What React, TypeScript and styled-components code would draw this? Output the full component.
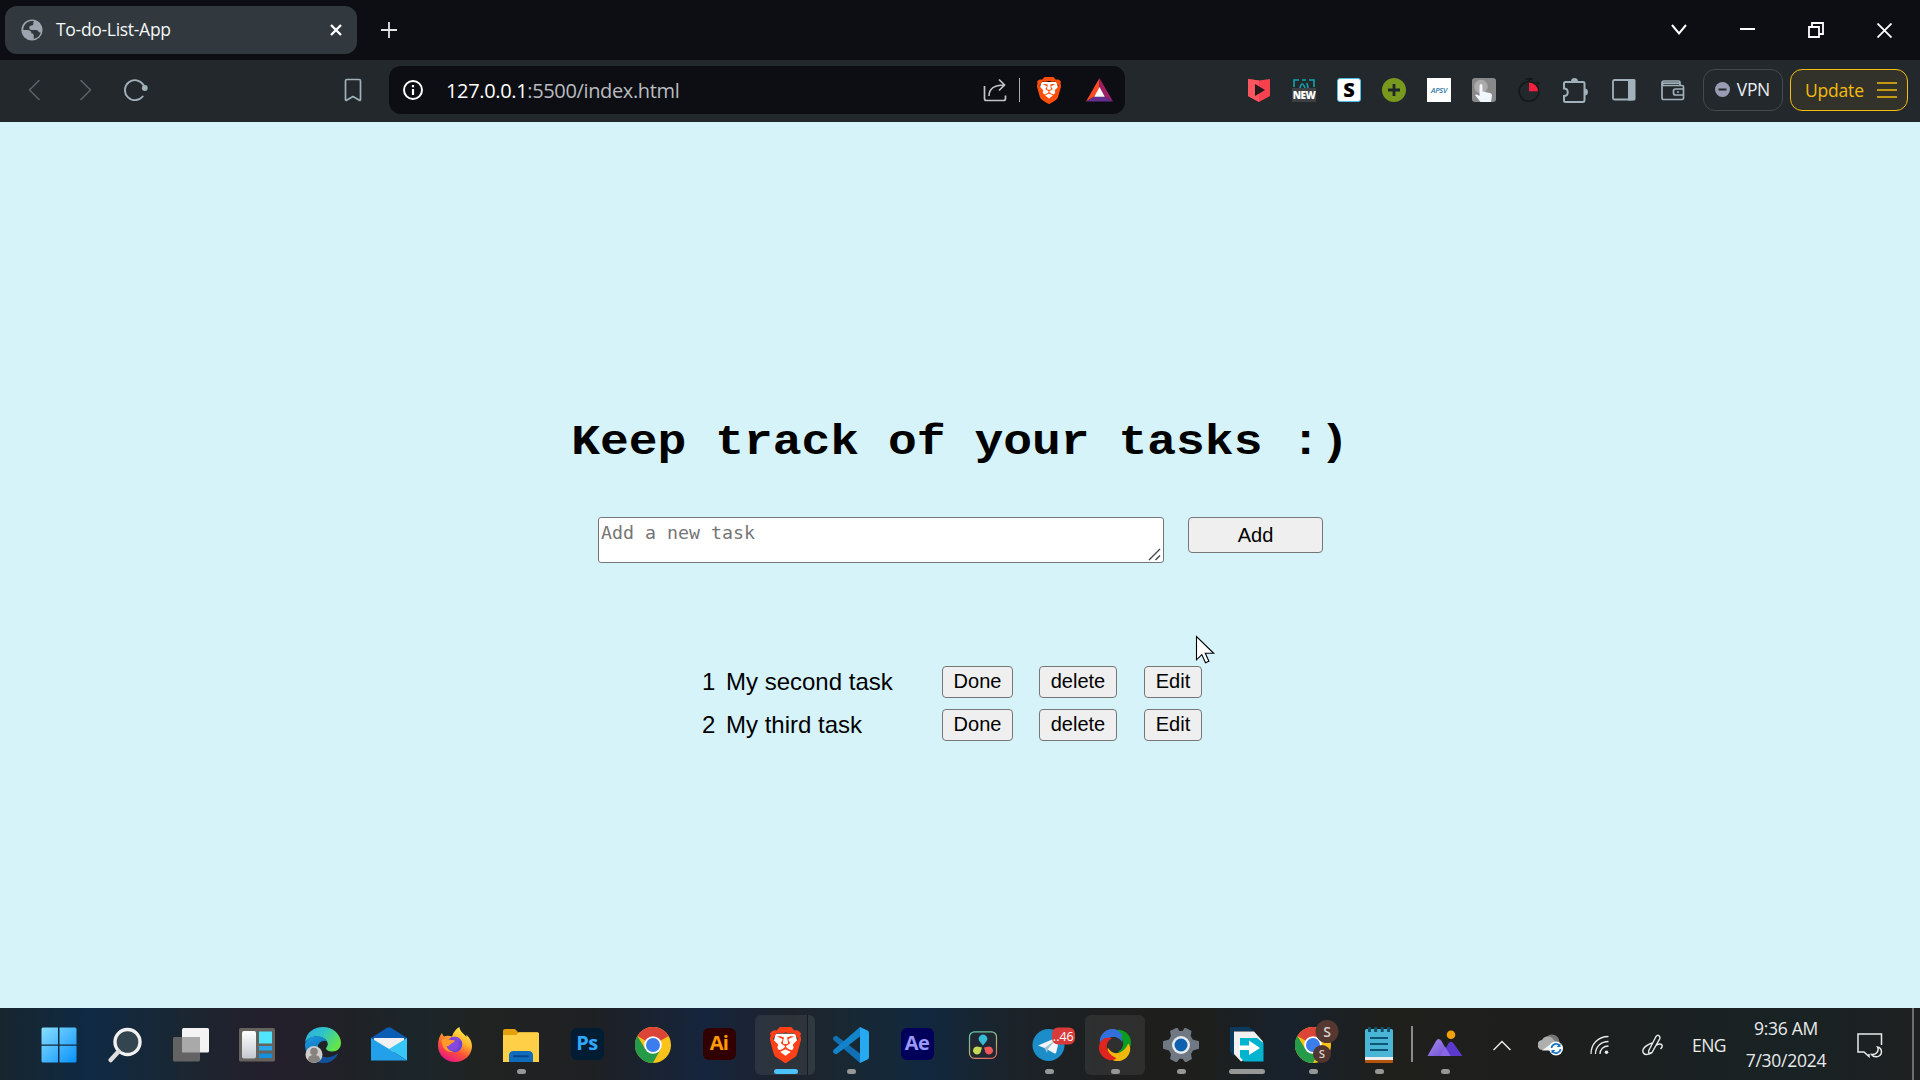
import React from "react";
import styled, { createGlobalStyle, css } from "styled-components";
import { SiBrave } from "react-icons/si";

const UI_FONT = `"Open Sans", "Noto Sans", sans-serif`;
const ICON = "#a0b1bb";

const GlobalStyle = createGlobalStyle`
  * { box-sizing: border-box; }
  html, body { margin: 0; padding: 0; overflow: hidden; background: #d5f3f9; }
  svg { display: block; flex: none; }
`;

const Screen = styled.div`
  display: grid;
  grid-template-rows: 60px 62px 1fr 72px;
  width: 1920px;
  height: 1080px;
  overflow: hidden;
  font-family: ${UI_FONT};
`;

/* ---------- window chrome ---------- */

const TabStrip = styled.header`
  display: flex;
  align-items: center;
  padding: 0 27px 0 5px;
  background: #0d0e13;
`;

const Tab = styled.div`
  display: flex;
  align-items: center;
  width: 352px;
  height: 48px;
  padding: 0 15px 0 16px;
  border-radius: 12px;
  background: #31393e;
  color: #f4f6f7;
`;

const TabTitle = styled.span`
  flex: 1;
  margin: 0 0 2px 13px;
  font-size: 17.5px;
  line-height: 24px;
  letter-spacing: -0.3px;
  white-space: nowrap;
`;

const NewTab = styled.div`
  margin-left: 24px;
`;

const WindowControls = styled.div`
  display: flex;
  align-items: center;
  gap: 53px;
  margin: 0 1px 0 auto;
`;

const Toolbar = styled.nav`
  display: flex;
  align-items: center;
  padding: 0 12px 2px 24px;
  background: #22282b;
  color: ${ICON};
`;

const NavButtons = styled.div`
  display: flex;
  align-items: center;
  gap: 28px;
  width: 317px;
`;

const BookmarkSlot = styled.div`
  width: 48px;
  padding-left: 3px;
`;

const AddressBar = styled.div`
  display: flex;
  align-items: center;
  width: 736px;
  height: 48px;
  padding: 0 12px 0 13px;
  border-radius: 12px;
  background: #0d0e13;
`;

const Address = styled.span`
  flex: 1;
  margin: 1px 0 0 22px;
  color: #b9bcc0;
  font-size: 20px;
  line-height: 26px;
  letter-spacing: -0.35px;
  white-space: nowrap;
  b { font-weight: 400; color: #fff; }
`;

const Divider = styled.i`
  width: 1px;
  height: 24px;
  margin: 0 17px 0 12px;
  background: #a9abae;
`;

const AddressActions = styled.div`
  display: flex;
  align-items: center;
  gap: 25px;
`;

const Extensions = styled.div`
  display: flex;
  align-items: center;
  gap: 21px;
  margin-left: auto;
`;

const BrowserTools = styled.div`
  display: flex;
  align-items: center;
  gap: 24px;
  margin: 0 18px 0 21px;
`;

const Square = styled.div<{ $bg: string }>`
  display: flex;
  align-items: center;
  justify-content: center;
  width: 24px;
  height: 24px;
  border-radius: 3px;
  background: ${(p) => p.$bg};
`;

const StylusBadge = styled(Square)`
  border: 1px solid #4dbdea;
  color: #000;
  font: 800 20px/22px ${UI_FONT};
`;

const ApsvBadge = styled(Square)`
  border-radius: 0;
  color: #2b77a8;
  font: italic 600 7.5px/9px ${UI_FONT};
  letter-spacing: -0.3px;
`;

const NewBadge = styled.div`
  display: flex;
  flex-direction: column;
  width: 24px;
  height: 24px;
  span {
    height: 14px;
    background: #3d4143;
    color: #fff;
    font: 800 10px/14px ${UI_FONT};
    text-align: center;
    letter-spacing: -0.5px;
  }
`;

const Pill = styled.div<{ $w: number; $accent?: boolean }>`
  display: flex;
  align-items: center;
  justify-content: space-between;
  width: ${(p) => p.$w}px;
  height: 42px;
  border: 1px solid #404b50;
  border-radius: 12px;
  padding: 0 12px 2px 11px;
  color: #eceef2;
  font-size: 17.5px;
  letter-spacing: -0.3px;
  ${(p) =>
    p.$accent &&
    css`
      margin-left: 7px;
      padding: 0 10px 1px 14px;
      border-color: #f5be10;
      background: #33322a;
      color: #f2bb0f;
      letter-spacing: -0.2px;
    `}
`;

/* ---------- to-do page ---------- */

const Page = styled.main`
  display: flex;
  flex-direction: column;
  align-items: center;
  padding-top: 292px;
  background: #d5f3f9;
  color: #000;
  font-family: "Liberation Sans", Arial, sans-serif;
`;

const Title = styled.h1`
  margin: 0;
  font: 700 48px/54px "Liberation Mono", "Courier New", monospace;
  white-space: pre;
  transform: scaleY(0.89);
  transform-origin: 50% 41px;
`;

const TaskForm = styled.form`
  display: flex;
  align-items: flex-start;
  gap: 24px;
  width: 725px;
  margin: 49px 0 0 1px;
`;

const Field = styled.div`
  position: relative;
  width: 566px;
  height: 46px;
  svg { position: absolute; right: 3px; bottom: 2px; }
`;

const TaskInput = styled.textarea`
  display: block;
  width: 100%;
  height: 100%;
  margin: 0;
  padding: 3px 2px;
  border: 1px solid #767676;
  border-radius: 3px;
  background: #fff;
  resize: none;
  overflow: hidden;
  outline: none;
  font: 18.27px/24px "DejaVu Sans Mono", "Liberation Mono", monospace;
  &::placeholder { color: #757575; opacity: 1; }
`;

const Button = styled.button<{ $w: number; $h?: number }>`
  width: ${(p) => p.$w}px;
  height: ${(p) => p.$h ?? 32}px;
  padding: 0 0 ${(p) => (p.$h ? 1 : 3)}px;
  border: 1px solid #767676;
  border-radius: 4px;
  background: #efefef;
  color: #000;
  font: 20px/24px "Liberation Sans", Arial, sans-serif;
`;

const TaskList = styled.div`
  display: grid;
  gap: 11px;
  width: 500px;
  margin: 103px 0 0 -16px;
`;

const TaskRow = styled.div`
  display: grid;
  grid-template-columns: 24px 216px 97px 105px 58px;
  align-items: center;
  height: 32px;
  font-size: 24px;
  line-height: 28px;
`;

const Pointer = styled.svg`
  position: absolute;
  left: 1195px;
  top: 635px;
`;

/* ---------- taskbar ---------- */

const Taskbar = styled.footer`
  display: flex;
  align-items: center;
  padding-left: 26px;
  background: linear-gradient(
    90deg,
    #17252d 0, #0f2a44 90px, #1b2630 190px, #231f2c 265px, #202126 350px, #1b262a 415px,
    #202321 480px, #1e2023 590px, #15253d 705px, #1e232b 790px, #182833 850px, #11283f 925px,
    #1b232a 1010px, #1e1f1e 1110px, #1e1e1c 1200px, #17222d 1290px, #1f1f1c 1380px,
    #1e1e1c 1530px, #1a2122 1700px, #192224 1800px, #1e2021 1920px
  );
  color: #e9eaea;
`;

const AppSlot = styled.div`
  display: flex;
  justify-content: center;
  width: 66px;
  height: 72px;
  padding-top: 7px;
`;

const AppTile = styled.div<{ $active?: boolean; $stack?: boolean }>`
  display: flex;
  flex-direction: column;
  align-items: center;
  width: 60px;
  height: 60px;
  padding-top: 12px;
  border-radius: 6px;
  background: ${(p) => (p.$active ? "rgba(255,255,255,0.075)" : "transparent")};
  ${(p) =>
    p.$stack &&
    css`
      border-right: 7px solid rgba(255, 255, 255, 0.02);
      box-shadow: inset -1px 0 0 rgba(0, 0, 0, 0.45);
      padding-left: 8px;
    `}
`;

const Indicator = styled.i<{ $w: number; $color?: string }>`
  width: ${(p) => p.$w}px;
  height: 5px;
  margin-top: 6px;
  border-radius: 3px;
  background: ${(p) => p.$color ?? "#969797"};
`;

const AdobeTile = styled.div<{ $bg: string; $fg: string }>`
  width: 33px;
  height: 32px;
  margin: 1px 0 3px;
  border-radius: 6px;
  background: ${(p) => p.$bg};
  color: ${(p) => p.$fg};
  font: 700 20px/29px ${UI_FONT};
  letter-spacing: -0.6px;
  text-align: center;
`;

const BarDivider = styled.i`
  width: 2px;
  height: 36px;
  margin: 0 -1px;
  background: #8a8b8a;
`;

const Tray = styled.div`
  display: flex;
  align-items: center;
  height: 72px;
  padding: 2px 6px 0 15px;
  margin-left: auto;
  flex: 1;
`;

const TrayItem = styled.div<{ $w: number }>`
  display: flex;
  justify-content: center;
  width: ${(p) => p.$w}px;
  font-size: 17.5px;
  letter-spacing: -0.6px;
`;

const Clock = styled.div`
  width: 110px;
  margin-left: 6px;
  margin-top: -2px;
  text-align: center;
  font-size: 17.5px;
  line-height: 32px;
  letter-spacing: -0.25px;
`;

const ShowDesktop = styled.i`
  align-self: stretch;
  width: 2px;
  margin: -2px 0 0 auto;
  background: #6b6d6e;
`;

/* ---------- icons ---------- */

const Line = ({ w, h, d, sw = 2, color = "currentColor", cap = "butt" }: { w: number; h: number; d: string; sw?: number; color?: string; cap?: "butt" | "round" }) => (
  <svg width={w} height={h} viewBox={`0 0 ${w} ${h}`} fill="none" stroke={color} strokeWidth={sw} strokeLinecap={cap} strokeLinejoin={cap === "round" ? "round" : "miter"}>
    <path d={d} />
  </svg>
);

const Globe = () => (
  <svg width="22" height="22" viewBox="0 0 22 22">
    <circle cx="11" cy="11" r="10.6" fill="#9fa5b0" />
    <path d="M13 2.300C7 1 2.300 5.500 2.300 11h4.200c2.500 0 4 1.300 4 3.500 1.500 0 2.200.6 2.200 2.200v3c3.500-.5 6.300-2.800 7-6.500-1 .5-1.800 0-2.200-.7-.5-1-1.500-1.500-3-1.500h-3.800c-1.500 0-2.400-1-2.400-2.300 0-1.500 1-2.200 2.500-2.200 1.400 0 1.500-1.200 1.500-2.200C12.300 3.300 12.500 2.800 13 2.300Z" fill="#31393e" />
  </svg>
);

const Brave = ({ size, w, color }: { size: number; w: number; color: string }) => (
  <svg width={w} height={size} viewBox="2 0 20 24" preserveAspectRatio="none">
    <path d="M5.500 4.500h13l1 5-3.500 8-4 3-4-3-3.500-8z" fill="#fff" />
    <SiBrave size={24} color={color} />
  </svg>
);

const Bat = () => (
  <svg width="27" height="24" viewBox="0 0 27 24">
    <path d="M13.500 0 0 23.500l8.500-5 5-9z" fill="#ff4a24" />
    <path d="M13.500 0 27 23.500l-8.500-5-5-9z" fill="#9e1f63" />
    <path d="M0 23.500h27l-8.500-5h-10z" fill="#662d91" />
    <path d="m13.500 9-5.300 9.800h10.600z" fill="#fff" />
  </svg>
);

const Puzzle = () => (
  <svg width="26" height="25" viewBox="0 0 26 25" fill="none" stroke="currentColor" strokeWidth="2">
    <path d="M3.500 4H21q1.500 0 1.500 1.500V22q0 2-1.500 2H3.500Q2 24 2 22.500V18c5 0 5-7.500 0-7.500v-5Q2 4 3.500 4Z" />
    <path d="M9 3.500a3.500 3.500 0 0 1 7 0zM22.500 10.500a3.500 3.500 0 0 1 0 7z" fill="currentColor" stroke="none" />
  </svg>
);

const Chrome = ({ s = 36 }: { s?: number }) => (
  <svg width={s} height={s} viewBox="0 0 36 36">
    <circle cx="18" cy="18" r="18" fill="#f9c31a" />
    <path d="M18 18 2.400 9A18 18 0 0 1 33.600 9Z" fill="#dc4437" />
    <path d="M2.400 9A18 18 0 0 0 18 36l7.400-13.500L18 18 10.500 22.200Z" fill="#259a49" />
    <circle cx="18" cy="18" r="8.800" fill="#fff" />
    <circle cx="18" cy="18" r="7" fill="#3b7ded" />
  </svg>
);

const Windows = () => (
  <svg width="36" height="36" viewBox="0 0 36 36">
    <defs><linearGradient id="win" x1="0" y1="0" x2="36" y2="36" gradientUnits="userSpaceOnUse"><stop stopColor="#8be0fd" /><stop offset="1" stopColor="#0690fb" /></linearGradient></defs>
    <path fill="url(#win)" d="M2 .5h15v17H.500V2Q.500.500 2 .500ZM18.500.500H34q1.500 0 1.500 1.500v15.500h-17zM.500 18.800H17v16.700H2Q.500 35.500.500 34zM18.500 18.800h17V34q0 1.500-1.500 1.500H18.500z" />
  </svg>
);

const Search = () => (
  <svg width="34" height="36" viewBox="0 0 34 36">
    <circle cx="19.500" cy="15" r="12.500" fill="#33454f" stroke="#f1f1f1" strokeWidth="3.400" />
    <path d="m10.500 24.500-7.800 8.500" stroke="#dedede" strokeWidth="4.500" strokeLinecap="round" />
  </svg>
);

const TaskView = () => (
  <svg width="36" height="36" viewBox="0 0 36 36">
    <rect x="9" y="1" width="27" height="24.500" rx="1.500" fill="#f3f3f3" />
    <rect y="10" width="27" height="24.500" rx="1.500" fill="#636363" />
    <path d="M9 10h16.500q1.500 0 1.500 1.500v14H9z" fill="#a9a9a9" />
  </svg>
);

const Widgets = () => (
  <svg width="36" height="36" viewBox="0 0 36 36">
    <defs><linearGradient id="wid" x1="0" y1="0" x2="0" y2="1"><stop stopColor="#fff" /><stop offset="1" stopColor="#c3c8cf" /></linearGradient></defs>
    <rect y="1" width="36" height="33.500" rx="1.500" fill="#66625e" />
    <rect x="3" y="4" width="14" height="27.500" rx="2" fill="url(#wid)" />
    <path fill="#50e6ff" d="M20 4.500h13v12H20z" />
    <path fill="#28a8ea" d="M20 19h13v4.500H20z" />
    <path fill="#1490df" d="M20 26.500h13V31H20z" />
  </svg>
);

const Edge = () => (
  <svg width="36" height="36" viewBox="0 0 36 36">
    <defs>
      <linearGradient id="edge1" x1="0" y1="0" x2="1" y2=".5"><stop stopColor="#2ca9e5" /><stop offset=".5" stopColor="#2fc4c8" /><stop offset="1" stopColor="#62e54b" /></linearGradient>
      <linearGradient id="edge2" x1="0" y1="0" x2=".6" y2="1"><stop stopColor="#1b9de2" /><stop offset="1" stopColor="#0c59a4" /></linearGradient>
    </defs>
    <path d="M0 16C1 5 9 0 18 0c10 0 18 7.500 18 16 0 5-4 8.500-8.500 8.500-4 0-6.500-1.500-6.500-3 0-1 1.800-2 1.800-4.500 0-4-5-7.500-11-7.500C6 9.500 2 12 0 16Z" fill="url(#edge1)" />
    <path d="M0 17c2-5 6-7.700 11.500-7.700 5 0 9 2 10.500 5-5-2-9.500 2-9.500 7.700 0 7 8 9.500 13 8 3-.8 5.500-2.500 7.500-3.500C30 33 24 36 18 36 8 36-.500 28 0 17Z" fill="url(#edge2)" />
    <path d="M12.500 22c0 6 6 10 12 9 3-.5 6-2.500 8.500-4.500C30 33 24 36 19 36c-8-1-11-9-6.500-14Z" fill="#12509a" />
    <circle cx="9" cy="27.500" r="8.500" fill="#d0cecb" />
    <circle cx="9" cy="24.500" r="3.800" fill="#87827d" />
    <path d="M3 33.500c0-5 3-5.500 6-5.500s6 .5 6 5.500Q9 38 3 33.500Z" fill="#87827d" />
  </svg>
);

const Mail = () => (
  <svg width="36" height="36" viewBox="0 0 36 36">
    <path d="M0 11 16 .800q2-1.200 4 0L36 11v5H0z" fill="#0a5cb5" />
    <path d="M3 11h30v8L18 28 3 19z" fill="#f2f1f1" />
    <path d="M36 11v22.500L18 22z" fill="#38c6f6" />
    <path d="M0 11v22.500h36L18 22z" fill="#23a0ea" />
  </svg>
);

const Firefox = () => (
  <svg width="36" height="36" viewBox="0 0 36 36">
    <defs><linearGradient id="ff" x1=".8" y1=".05" x2=".3" y2="1"><stop stopColor="#fff04d" /><stop offset=".35" stopColor="#ffb52c" /><stop offset=".65" stopColor="#ff5138" /><stop offset="1" stopColor="#e31587" /></linearGradient></defs>
    <path d="M5 6c.5 1.500 1 2.500 2 3.500 2-1 5-1.300 8 0C16.500 5 19 1.500 22.500 0c0 4 4 6.500 7 10 0-1 0-1.500-.3-2.500C33 11 35 15 35 19c0 9-7.500 16-17 16S1 28 1 18.500C1 13 2.500 9 5 6Z" fill="url(#ff)" />
    <circle cx="17.500" cy="17.500" r="7.800" fill="#6b43d8" />
    <path d="M14 10.500c4-2 9 0 11 4-2-1-3.500-.5-4-.3 2 3 1 8-3.500 9-6 1-9-4-7.500-7.500 2 1 5 .3 8-1.500-1.300-1.500-3-2-4-3.700Z" fill="#8448dd" />
    <path d="M4.500 13c3-2 6-1 8-.5 1.500.6 4.500.6 5.500 1-.5 2-3.500 2.500-5 4-.8 1.200-2 2-3.500 1.500 1 4 4.500 5.500 7.500 5.500-6 2-12-2-12.500-11.500Z" fill="#ff9a2b" />
  </svg>
);

const Folder = () => (
  <svg width="36" height="36" viewBox="0 0 36 36">
    <path d="M0 4q0-2 2-2h10l3.500 3.500H34q2 0 2 2V12H0z" fill="#e2a00c" />
    <path d="M0 8h13l3-2.700h18.500Q36 5.300 36 7v28H0z" fill="#ffcf48" />
    <path d="M6 35v-6.500Q6 24 10.500 24h15q4.500 0 4.500 4.500V35z" fill="#0f6cbd" />
    <path d="M11 29.200h14" stroke="#0a4585" strokeWidth="2" strokeLinecap="round" />
  </svg>
);

const VSCode = () => (
  <svg width="36" height="36" viewBox="0 0 36 36">
    <path d="M0 11.500q0-1 1-1.700l1.500-.8q1-.4 2 .4L27 26.500V36L1 13.500Q0 12.500 0 11.500Z" fill="#1070b3" />
    <path d="M0 24.500q0 1 1 1.700l1.500.8q1 .4 2-.4L27 9.500V0L1 22.500Q0 23.500 0 24.500Z" fill="#1384cb" />
    <path d="M27 0v36l7.500-3.500Q36 31.800 36 30V6q0-1.800-1.500-2.500L27 0Z" fill="#27a9f2" />
  </svg>
);

const Davinci = () => (
  <svg width="30" height="36" viewBox="0 0 30 36">
    <defs><linearGradient id="dv" x1=".3" y1="0" x2=".7" y2="1"><stop stopColor="#61c8ab" /><stop offset=".6" stopColor="#b8b06a" /><stop offset="1" stopColor="#e0695c" /></linearGradient></defs>
    <rect x="1.500" y="4.800" width="27" height="26.500" rx="5" fill="#202834" stroke="url(#dv)" strokeWidth="1.200" />
    <path d="M15 18.500 11.700 14.500a4.200 4.200 0 1 1 6.600 0Z" fill="#37b9d8" />
    <path d="m14 20.500-1.500 5a4 4 0 1 1-3.500-6Z" fill="#c5d954" />
    <path d="m16 20.500 1.500 5a4 4 0 1 0 3.500-6Z" fill="#ef5758" />
  </svg>
);

const Telegram = () => (
  <svg width="44" height="36" viewBox="0 0 44 36">
    <circle cx="17.500" cy="18" r="16" fill="#1c8dc9" />
    <path d="m7 18.500 20-8.500q2-.5 1.500 1.700L25.200 25.500q-.4 1.500-2 .7L13.500 21z" fill="#f2f5f7" />
    <path d="m13.500 21 11-8-7.500 9-1 4z" fill="#9fc2d6" />
    <rect x="21" y=".5" width="23" height="17" rx="6" fill="#d83b39" />
    <text x="32.300" y="13.500" fill="#fff" fontSize="12.500" fontFamily="Open Sans, sans-serif" textAnchor="middle">..46</text>
  </svg>
);

const PETAL = "M2 12C4 3 13-1 20 2c5.500 2.500 7 8 5.500 13C22.500 9.500 17 8 12 10.500c-4 2-6 5-8 9-1.500-1.500-2.500-4.500-2-7.500Z";

const ShareX = () => (
  <svg width="36" height="36" viewBox="0 0 36 36">
    <g transform="translate(1 1) scale(.945)">
      <path d={PETAL} fill="#3470dc" />
      <path d={PETAL} fill="#0c9c22" transform="rotate(90 18 18)" />
      <path d={PETAL} fill="#f0b90c" transform="rotate(180 18 18)" />
      <path d={PETAL} fill="#e0241f" transform="rotate(270 18 18)" />
      <path d="M5.500 7C9 2 15 .200 20 2c3 1.400 5 3.800 5.700 6.800L22 11.500C18 8 14 8.500 10.500 11z" fill="#3470dc" />
    </g>
  </svg>
);

const Gear = () => (
  <svg width="36" height="36" viewBox="0 0 36 36">
    <path d="M13 1h1.500l2 3h3l2-3H23l5.500 3-.8 5 2 3.500 6.300 1.700v7.600l-6 1.700-2 3.500.9 5L23.500 35H22l-2.500-3.200h-3L14 35h-1.500L7 32l1-5-2-3.500-6-1.700v-7.600L6 12.500 8 9 7 4z" fill="#6f7883" />
    <circle cx="18" cy="18" r="9" fill="#e8ebed" />
    <circle cx="18" cy="18" r="6.500" fill="#0f61b0" />
  </svg>
);

const Bandicut = () => (
  <svg width="36" height="36" viewBox="0 0 36 36">
    <path d="M1 0h19l5 4H5v25L1 24z" fill="#0a3a5e" />
    <path d="M5 4.500h20l9 10V19L29 26 12 34.500 5 27z" fill="#f0f1f1" />
    <path d="M11 11h17l6.500 5v18.500H15L11 30z" fill="#00b4d0" />
    <path d="M10 18.500h10v-5L31 21l-11 7v-5H10z" fill="#fff" />
  </svg>
);

const ChromeProfiles = () => (
  <svg width="44" height="44" viewBox="0 0 44 44">
    <svg x="0" y="8" width="36" height="36"><Chrome /></svg>
    <circle cx="32" cy="12.500" r="11.500" fill="#55382f" />
    <circle cx="27" cy="35" r="9" fill="#51352e" />
    <g fill="#d9d0cd" fontFamily="Open Sans, sans-serif" textAnchor="middle">
      <text x="32" y="17.500" fontSize="14" fontWeight="600">S</text>
      <text x="27" y="39" fontSize="11.500" fontWeight="600">S</text>
    </g>
  </svg>
);

const Notepad = () => (
  <svg width="30" height="36" viewBox="0 0 30 36">
    <rect x="1" y="28" width="28" height="8" rx="1" fill="#b4530c" />
    <path d="M1 28h28v5H1z" fill="#f0eeec" />
    <path d="M1 3.500Q1 2 2.500 2h25Q29 2 29 3.500V30H1z" fill="#4bb5d6" />
    <path d="M6 11h18M6 17h18M6 23h18" stroke="#0d5574" strokeWidth="2" />
    <path d="M5.500 0v5M11.700 0v5M18.200 0v5M24.500 0v5" stroke="#12536e" strokeWidth="3" />
  </svg>
);

const Photos = () => (
  <svg width="36" height="36" viewBox="0 0 36 36">
    <defs><linearGradient id="ph" x1="0" y1="0" x2="1" y2="1"><stop stopColor="#a98ced" /><stop offset="1" stopColor="#6a4bd4" /></linearGradient></defs>
    <circle cx="24" cy="7.800" r="4.300" fill="#f2a30c" />
    <path d="M.500 29 9 14q2.500-4 5.500 0l8.500 15z" fill="url(#ph)" />
    <path d="M15 29 21 17q3-4.500 6 0l8.500 12z" fill="#5a39cc" />
    <path d="m13 29 5-9.500L23.500 29z" fill="#8a68e4" />
  </svg>
);

type AppItem = { icon: React.ReactNode; dot?: number; color?: string; active?: boolean; stack?: boolean };

const apps: AppItem[] = [
  { icon: <Windows /> },
  { icon: <Search /> },
  { icon: <TaskView /> },
  { icon: <Widgets /> },
  { icon: <Edge /> },
  { icon: <Mail /> },
  { icon: <Firefox /> },
  { icon: <Folder />, dot: 9 },
  { icon: <AdobeTile $bg="#001d34" $fg="#31a8ff">Ps</AdobeTile> },
  { icon: <Chrome /> },
  { icon: <AdobeTile $bg="#310000" $fg="#ff9a00">Ai</AdobeTile> },
  { icon: <Brave size={36} w={31} color="#ff4018" />, dot: 24, color: "#4cc2ff", active: true, stack: true },
  { icon: <VSCode />, dot: 9 },
  { icon: <AdobeTile $bg="#00005b" $fg="#9999ff">Ae</AdobeTile> },
  { icon: <Davinci /> },
  { icon: <Telegram />, dot: 9 },
  { icon: <ShareX />, dot: 9, active: true },
  { icon: <Gear />, dot: 9 },
  { icon: <Bandicut />, dot: 36 },
  { icon: <ChromeProfiles />, dot: 9 },
  { icon: <Notepad />, dot: 9 },
];

const IconBox = styled.div`
  display: flex;
  align-items: flex-end;
  width: 36px;
  height: 36px;
  justify-content: center;
  &:has(> svg[width="44"]) { justify-content: flex-start; }
`;

const TaskbarApp = ({ icon, dot, color, active, stack }: AppItem) => (
  <AppSlot>
    <AppTile $active={active} $stack={stack}>
      <IconBox>{icon}</IconBox>
      {dot && <Indicator $w={dot} $color={color} />}
    </AppTile>
  </AppSlot>
);

const tasks = ["My second task", "My third task"];

export default function App() {
  return (
    <Screen>
      <GlobalStyle />
      <TabStrip>
        <Tab>
          <Globe />
          <TabTitle>To-do-List-App</TabTitle>
          <Line w={12} h={12} d="m1 1 10 10M11 1 1 11" sw={2.4} color="#fff" />
        </Tab>
        <NewTab><Line w={16} h={16} d="M8 0v16M0 8h16" sw={1.8} color="#e3e4e6" /></NewTab>
        <WindowControls>
          <Line w={16} h={12} d="m1 1 7 8.500L15 1" color="#fff" />
          <Line w={15} h={4} d="M0 1h15" color="#fff" />
          <Line w={16} h={16} d="M1 5h10v10H1zM4 5V1h11v11h-4" sw={1.8} color="#fff" />
          <Line w={15} h={15} d="m.5.5 14 14M14.500.5l-14 14" sw={1.8} color="#fff" />
        </WindowControls>
      </TabStrip>

      <Toolbar>
        <NavButtons>
          <Line w={20} h={22} d="M15 1.500 5.500 11l9.500 9.500" sw={1.6} color="#586369" cap="round" />
          <Line w={24} h={22} d="m9 1.500 9.500 9.500L9 20.500" sw={1.6} color="#586369" cap="round" />
          <svg width="24" height="22" viewBox="0 0 24 22" fill="none" stroke={ICON} strokeWidth="1.900" strokeLinecap="round">
            <path d="M19.500 6A10 10 0 1 0 18.700 17.500" />
            <circle cx="20.800" cy="9" r="2.900" fill={ICON} stroke="none" />
          </svg>
        </NavButtons>
        <BookmarkSlot>
          <Line w={18} h={24} d="M3 1.500h12q1.500 0 1.500 1.500v18.500q0 1.500-1.500.5l-6-3.500L3 22q-1.500 1-1.500-.5V3Q1.500 1.500 3 1.500Z" sw={1.7} cap="round" />
        </BookmarkSlot>
        <AddressBar>
          <svg width="22" height="22" viewBox="0 0 22 22">
            <circle cx="11" cy="11" r="9" fill="none" stroke="#fff" strokeWidth="2" />
            <path d="M11 10v6M11 6v2.200" stroke="#fff" strokeWidth="2.200" />
          </svg>
          <Address><b>127.0.0.1</b>:5500/index.html</Address>
          <Line w={24} h={24} d="M1.500 8v12.500q0 2 2 2h17q2 0 2-2v-3M6 18C6 11 11 7 21 7M16 1.500 21.500 7 16 12.500" sw={1.7} color="#c1c3c6" />
          <Divider />
          <AddressActions>
            <Brave size={27} w={24} color="#fb4e0b" />
            <Bat />
          </AddressActions>
        </AddressBar>
        <Extensions>
          <svg width="24" height="24" viewBox="0 0 24 24">
            <path d="m1 1 11 1.500L23 1v17l-11 6-11-6z" fill="#f4414d" />
            <path d="m1 1 11 1.500V24L1 18z" fill="#fa5660" />
            <path d="m8 6 10 6-10 6z" fill="#22191c" />
          </svg>
          <NewBadge>
            <Line w={24} h={10} d="M2 9V2h5M10 2h4M17 2h5v7M8 10q2-8 5 0M15 5l1 5" sw={1.6} color="#10a2ae" />
            <span>NEW</span>
          </NewBadge>
          <StylusBadge $bg="#fff">S</StylusBadge>
          <svg width="24" height="24" viewBox="0 0 24 24">
            <circle cx="12" cy="12" r="12" fill="#78991d" />
            <path d="M12 6v12M6 12h12" stroke="#20272a" strokeWidth="2.800" />
          </svg>
          <ApsvBadge $bg="#fff">APSV</ApsvBadge>
          <Square $bg="#898989">
            <svg width="24" height="24" viewBox="0 0 24 24">
              <circle cx="9" cy="8.500" r="6.800" fill="#ababab" />
              <path d="M7.500 8q0-2 1.500-2t1.500 2v5.500l7.500 1.500q2 .5 2 2.500l-1 6.500H8.500L3 17q1.500-1.500 4.500 1z" fill="#f2f6ff" />
            </svg>
          </Square>
          <svg width="24" height="24" viewBox="0 0 24 24">
            <circle cx="12" cy="13.500" r="9.800" fill="#22282b" stroke="#151819" strokeWidth="1.600" />
            <path d="M8.500 1h7M12 1v3M20 4l2 2" stroke="#151819" strokeWidth="2" />
            <path d="M12 4.500a9 9 0 0 1 9 8.700h-9z" fill="#f5203d" />
          </svg>
        </Extensions>
        <BrowserTools>
          <Puzzle />
          <svg width="24" height="22" viewBox="0 0 24 22">
            <rect x="1" y="1" width="21" height="19.500" rx="1.500" fill="none" stroke={ICON} strokeWidth="1.800" />
            <path d="M16 0h6q1.500 0 1.500 1.500v18.500q0 1.500-1.500 1.500h-6z" fill={ICON} />
          </svg>
          <svg width="25" height="21" viewBox="0 0 25 21" fill="none" stroke={ICON} strokeWidth="1.700">
            <path d="M20 5V2.500Q20 1 18.500 1h-15Q2 1 2 2.700v15Q2 19.500 3.800 19.500H22q1.500 0 1.500-1.500V7q0-1.500-1.500-1.500H4Q2 5.500 2 3.200h18M23.500 9h-8q-2 0-2 2v2q0 2 2 2h8M17 12h2" />
          </svg>
        </BrowserTools>
        <Pill $w={80}>
          <svg width="15" height="15" viewBox="0 0 15 15"><circle cx="7.500" cy="7.500" r="7.500" fill="#9a9bb4" /><path d="M3.500 7.500h8" stroke="#22282b" strokeWidth="2" /></svg>
          VPN
        </Pill>
        <Pill $w={118} $accent>
          Update
          <Line w={20} h={16} d="M0 1h20M0 8h20M0 15h20" sw={1.6} />
        </Pill>
      </Toolbar>

      <Page>
        <Title>Keep track of your tasks :)</Title>
        <TaskForm onSubmit={(e) => e.preventDefault()}>
          <Field>
            <TaskInput placeholder="Add a new task" />
            <Line w={13} h={13} d="M1 12 12 1M7.500 12 12 7.500" sw={1.4} color="#444" />
          </Field>
          <Button type="button" $w={135} $h={36}>Add</Button>
        </TaskForm>
        <TaskList>
          {tasks.map((task, i) => (
            <TaskRow key={task}>
              <span>{i + 1}</span>
              <span>{task}</span>
              <Button $w={71}>Done</Button>
              <Button $w={78}>delete</Button>
              <Button $w={58}>Edit</Button>
            </TaskRow>
          ))}
        </TaskList>
      </Page>

      <Taskbar>
        {apps.map((app, i) => <TaskbarApp key={i} {...app} />)}
        <BarDivider />
        <TaskbarApp icon={<Photos />} dot={9} />
        <Tray>
          <TrayItem $w={18}><Line w={18} h={11} d="m.5 10 8.500-8.500 8.500 8.500" sw={1.5} /></TrayItem>
          <TrayItem $w={78}>
            <svg width="25" height="22" viewBox="0 0 25 22">
              <circle cx="14" cy="8" r="7.500" fill="#777" />
              <path d="M5 16a5 5 0 0 1-1-10 6.500 6.500 0 0 1 11-1l5 6v5z" fill="#aeaeae" />
              <path d="M4 16.500 14 9l6 7.500z" fill="#f1f1f1" />
              <circle cx="18" cy="14.500" r="7" fill="#fff" />
              <path d="M13.500 14a4.600 4.600 0 0 1 8-2.500M22.500 15a4.600 4.600 0 0 1-8 2.500" fill="none" stroke="#1874c5" strokeWidth="1.700" />
              <path d="M22.500 9v4h-4zM13.500 20v-4h4z" fill="#1874c5" />
            </svg>
          </TrayItem>
          <TrayItem $w={22}>
            <svg width="20" height="20" viewBox="0 0 20 20" fill="none" stroke="currentColor" strokeWidth="1.300">
              <path d="M1 19C1 9 8 1.500 18.500 1.500M5.500 19C5.500 11.500 11 6.500 18.500 6.500M10 19c0-4.500 3.500-8 8.500-8" />
              <circle cx="16.500" cy="17.200" r="1.800" fill="currentColor" stroke="none" />
            </svg>
          </TrayItem>
          <TrayItem $w={82}>
            <svg width="21" height="22" viewBox="0 0 21 22" fill="none" stroke="currentColor" strokeWidth="1.400" strokeLinejoin="round">
              <path d="M7 20 6.500 17 14 2.500q1.500-2 3-.7t.7 3L10 18.500zM10 9C2 12-.500 16 1.500 19s6 1 7.500-.5M14.500 11c5-2.500 7.500.5 4 4" />
            </svg>
          </TrayItem>
          <TrayItem $w={32}>ENG</TrayItem>
          <Clock>
            <div>9:36 AM</div>
            <div>7/30/2024</div>
          </Clock>
          <TrayItem $w={58}>
            <svg width="26" height="25" viewBox="0 0 26 25" fill="none" stroke="currentColor" strokeWidth="1.500">
              <path d="M24.500 12V1H1v18h6l5 4.500V21" />
              <path d="M20.500 14c2 4-1.500 8-6 7.500 3 4 9.500 2.500 10-2.500 0-3-2-4.500-4-5Z" />
            </svg>
          </TrayItem>
          <ShowDesktop />
        </Tray>
      </Taskbar>

      <Pointer width="21" height="30" viewBox="0 0 21 30">
        <path d="M1.500 1.500v23.300l5.300-5.200 3.700 8.200 3.400-1.500-3.600-8h8.400z" fill="#fff" stroke="#000" strokeWidth="1.100" />
      </Pointer>
    </Screen>
  );
}
